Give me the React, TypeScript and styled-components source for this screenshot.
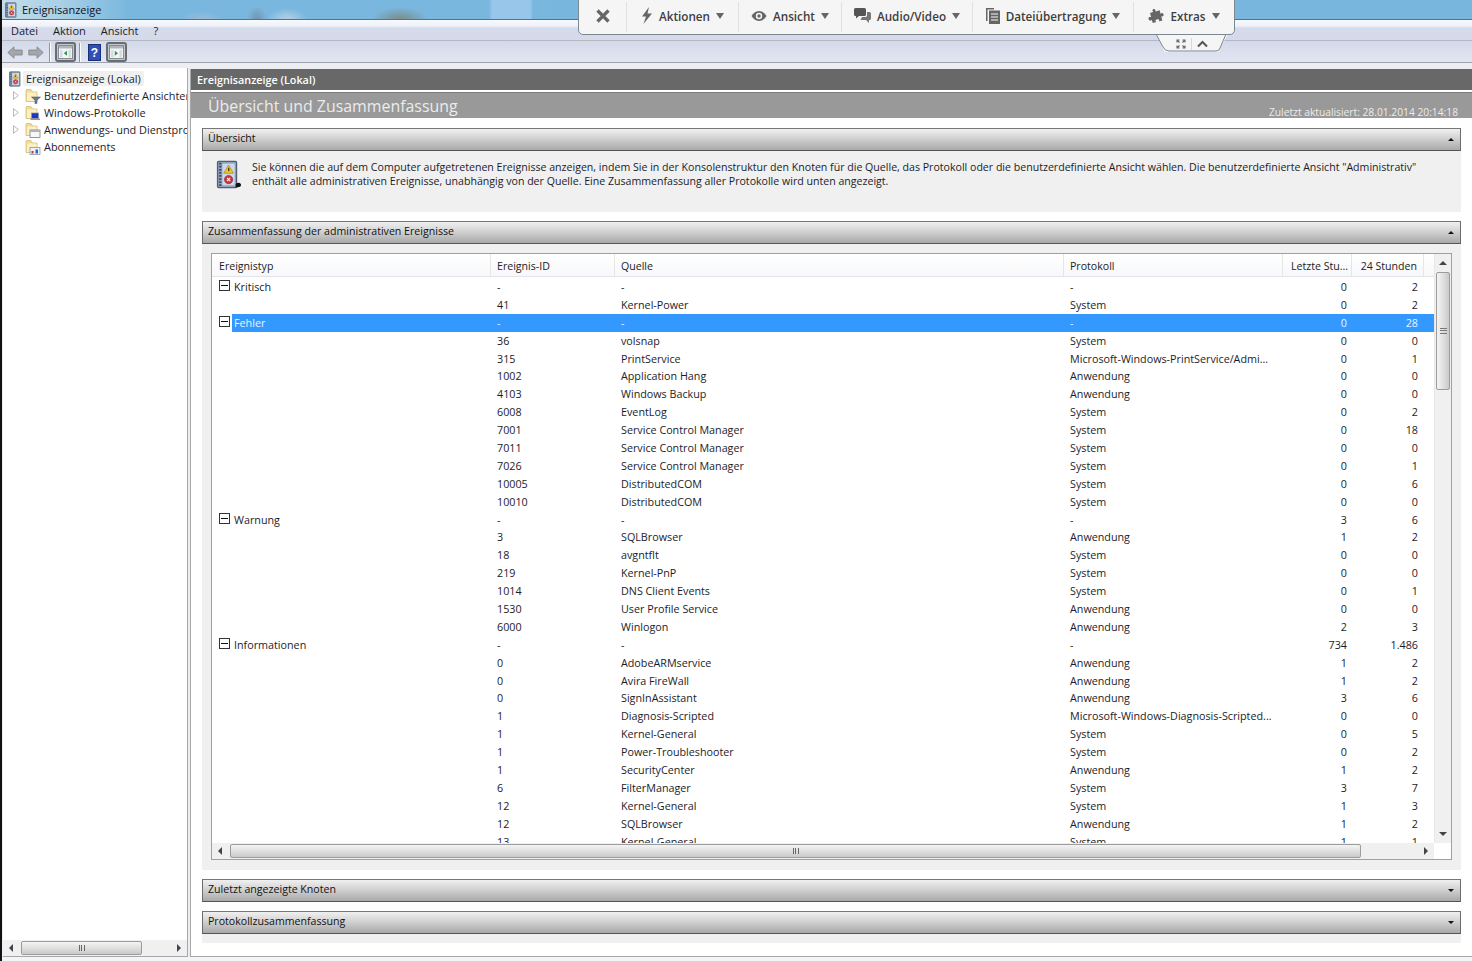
import React from 'react';
import styled, { createGlobalStyle } from 'styled-components';

const Global = createGlobalStyle`
  html, body { margin: 0; padding: 0; height: 961px; overflow: hidden; background: #f1f4f9; }
  #root { height: 961px; }
  * { box-sizing: border-box; }
`;
const FONT = `"Open Sans", "Noto Sans", "Liberation Sans", sans-serif`;

const Page = styled.div`
  position: relative; width: 1472px; height: 961px; overflow: hidden;
  font: 10.75px ${FONT}; color: #1c1c28; border-left: 2px solid #111;
  display: flex; flex-direction: column;
`;
const TitleBar = styled.div`
  height: 20px; flex: none; display: flex; align-items: center; gap: 3px; padding-left: 1px;
  background:
    radial-gradient(ellipse 10px 14px at 255px 20px, rgba(110,115,135,.55), transparent),
    radial-gradient(ellipse 22px 9px at 200px 20px, rgba(170,190,215,.7), transparent),
    radial-gradient(ellipse 20px 12px at 285px 20px, rgba(205,220,235,.75), transparent),
    radial-gradient(ellipse 28px 13px at 398px 20px, rgba(120,125,105,.75), transparent),
    linear-gradient(90deg, transparent 487px, rgba(165,205,240,.7) 490px, rgba(165,205,240,.7) 528px, transparent 531px),
    linear-gradient(90deg, #c3dcea 0, #a8d0e6 60px, #7ab7de 125px, #79b6dd 100%);
  border-bottom: 1px solid #5e6f7e; font-size: 11px; color: #101018;
`;
const MenuBar = styled.div`
  height: 21px; flex: none; display: flex; align-items: center; gap: 15px; padding-left: 9px;
  background: linear-gradient(#f8f9fc 0, #eef1f8 30%, #d6dbea 40%, #d5daea 100%); border-bottom: 1px solid #b4b8c0; font-size: 11px;
`;
const ToolBar = styled.div`
  height: 22px; flex: none; display: flex; align-items: center; padding: 1px 0 0 5px;
  background: linear-gradient(#d3d9ea, #e2e6f2); border-bottom: 1px solid #9ea3ab;
`;
const ToolSlot = styled.div<{ $ml: number }>`margin-left: ${p => p.$ml}px; display: flex; flex: none;`;
const ToolSep = styled.div<{ $ml: number }>`width: 1px; height: 19px; flex: none; margin-left: ${p => p.$ml}px; background: #8f959e; box-shadow: 1px 0 #fff;`;
const ToolFrame = styled.div<{ $ml: number }>`
  width: 21px; height: 20px; flex: none; margin-left: ${p => p.$ml}px; border: 2px solid #686c73; border-radius: 3px; background: #c3c6cc;
  display: flex; align-items: center; justify-content: center;
`;
const Columns = styled.div`
  flex: 1; min-height: 0; display: flex; padding-top: 5px; background: #eceef2;
`;
const TreePane = styled.div`
  width: 185px; flex: none; margin-left: 1px; background: #fff; border-right: 1px solid #a8a8a8; border-bottom: 1px solid #a8a8a8;
  display: flex; flex-direction: column; padding-top: 2px;
`;
const TreeList = styled.div`flex: 1; overflow: hidden; display: flex; flex-direction: column;`;
const TreeRow = styled.div<{ $root?: boolean }>`
  height: 17px; flex: none; display: flex; align-items: center; white-space: nowrap; overflow: hidden;
  padding-left: ${p => (p.$root ? 4 : 9)}px; font-size: 10.9px;
`;
const RootLabel = styled.span`background: #f0f0f0; border-radius: 2px; padding: 0 3px;`;
const TreeLabel = styled.span`margin-left: 3px;`;
const HScroll = styled.div`height: 16px; flex: none; background: #f0f0f0; position: relative;`;
const Main = styled.div`
  flex: 1; min-width: 0; margin-left: 2px; margin-top: 1px; border-left: 1px solid #a8a8a8; border-bottom: 1px solid #a8a8a8;
  display: flex; flex-direction: column; background: #fff;
`;
const DarkHead = styled.div`
  height: 21px; flex: none; background: #686868; color: #fff; font-weight: 600; font-size: 10.8px;
  display: flex; align-items: center; padding-left: 6px;
`;
const GrayHead = styled.div`
  height: 26px; flex: none; margin-top: 2px; background: #999; color: #ececec; display: flex; justify-content: space-between;
  padding: 0 14px 0 17px; border-top: 1px solid #7d7d7d;
`;
const GrayTitle = styled.div`font-size: 15.9px; line-height: 26px;`;
const Updated = styled.div`font-size: 10.25px; align-self: flex-end; line-height: 14px; margin-bottom: -1px;`;
const Content = styled.div`flex: 1; min-height: 0; padding: 10px 11px 0 11px; display: flex; flex-direction: column; background: #fff;`;
const SectionHead = styled.div`
  height: 23px; flex: none; border: 1px solid #6c6c6c; border-bottom-color: #555; border-top-color: #777; background: linear-gradient(#f0f0f0, #dcdcdc 30%, #a9a9a9);
  display: flex; align-items: center; justify-content: space-between; padding: 0 6px 3px 5px; font-size: 10.6px; color: #111;
`;
const Caret = styled.span<{ $up?: boolean }>`
  width: 0; height: 0; margin-top: 2px; border-left: 3px solid transparent; border-right: 3px solid transparent;
  ${p => (p.$up ? 'border-bottom: 3px solid #111;' : 'border-top: 3px solid #111;')}
`;
const SectionBody = styled.div<{ $h: number; $gap: number }>`
  height: ${p => p.$h}px; flex: none; margin-bottom: ${p => p.$gap}px; background: #f0f0f0;
`;
const Intro = styled.div`display: flex; padding: 9px 0 0 11px; gap: 10px; font-size: 10.6px; line-height: 14px;`;
const IntroText = styled.div`width: 1175px;`;
const ListBody = styled(SectionBody)`padding: 9px 9px 0 9px;`;
const ListBox = styled.div`height: 607px; background: #fff; border: 1px solid #a0a0a0; display: flex; flex-direction: column; position: relative;`;
const ListTop = styled.div`flex: 1; min-height: 0; display: flex;`;
const ListMain = styled.div`flex: 1; min-width: 0; overflow: hidden; display: flex; flex-direction: column;`;
const COLS = '279px 124px 449px 219px 69px 72px 10px';
const HeadRow = styled.div`
  display: grid; grid-template-columns: ${COLS}; height: 23px; flex: none; border-bottom: 1px solid #e2e4e8; font-size: 10.6px; color: #222;
`;
const HeadCell = styled.div<{ $right?: boolean; $pl?: number }>`
  padding: 1px 6px 0 ${p => p.$pl ?? 6}px; border-right: 1px solid #e6e6e6; display: flex; align-items: center; white-space: nowrap;
  justify-content: ${p => (p.$right ? 'flex-end' : 'flex-start')};
  background: linear-gradient(#fff, #f7f8fa);
`;
const Rows = styled.div`padding-top: 1px;`;
const Row = styled.div`
  display: grid; grid-template-columns: ${COLS}; height: 17.9px; align-items: center; font-size: 10.75px; white-space: nowrap;
  color: #1c1c28;
`;
const TypeCell = styled.div`display: flex; align-items: center; padding-left: 7px; height: 100%;`;
const TypeLabel = styled.span<{ $sel?: boolean }>`margin-left: 2px; align-self: stretch; display: flex; align-items: center; flex: 1; padding-left: 2px;
  ${p => p.$sel && 'background: #3399ff; color: #eaf4ff;'}
`;
const Cell = styled.div<{ $sel?: boolean; $right?: boolean; $pr?: number }>`
  padding: 0 ${p => p.$pr ?? 6}px 0 6px; height: 100%; display: flex; align-items: center; overflow: hidden;
  justify-content: ${p => (p.$right ? 'flex-end' : 'flex-start')};
  ${p => p.$sel && 'background: #3399ff; color: #eaf4ff;'}
`;
const Toggle = styled.span`
  width: 11px; height: 11px; flex: none; border: 1px solid #333; position: relative; background: #fff; margin-top: -3px;
  &::after { content: ''; position: absolute; left: 1px; right: 1px; top: 4px; height: 1px; background: #111; }
`;
const VScroll = styled.div`width: 17px; flex: none; background: #f0f0f0; position: relative; border-left: 1px solid #e8e8e8;`;
const ArrowBtn = styled.div<{ $dir: 'up' | 'down' | 'left' | 'right' }>`
  position: absolute; width: 0; height: 0;
  ${p => p.$dir === 'up' && 'top: 7px; left: 4px; border-left: 4px solid transparent; border-right: 4px solid transparent; border-bottom: 4px solid #444;'}
  ${p => p.$dir === 'down' && 'bottom: 7px; left: 4px; border-left: 4px solid transparent; border-right: 4px solid transparent; border-top: 4px solid #444;'}
  ${p => p.$dir === 'left' && 'left: 6px; top: 4px; border-top: 4px solid transparent; border-bottom: 4px solid transparent; border-right: 4px solid #444;'}
  ${p => p.$dir === 'right' && 'right: 6px; top: 4px; border-top: 4px solid transparent; border-bottom: 4px solid transparent; border-left: 4px solid #444;'}
`;
const VThumb = styled.div`
  position: absolute; left: 1px; right: 1px; top: 18px; height: 118px; border: 1px solid #9c9c9c; border-radius: 2px;
  background: linear-gradient(90deg, #f4f4f4, #dedede 55%, #c9c9c9);
`;
const GripV = styled.div`position: absolute; left: 3px; top: 55px; width: 7px; height: 6px; border-top: 1px solid #777; border-bottom: 1px solid #777;
  &::after { content: ''; display: block; height: 1px; background: #777; margin-top: 1px; }`;
const HBar = styled.div`height: 16px; flex: none; background: #f0f0f0; position: relative; margin-right: 17px;`;
const HThumb = styled.div<{ $l: number; $w: number }>`
  position: absolute; left: ${p => p.$l}px; width: ${p => p.$w}px; top: 1px; bottom: 1px; border: 1px solid #9c9c9c; border-radius: 2px;
  background: linear-gradient(#f4f4f4, #dedede 55%, #c9c9c9);
`;
const GripH = styled.div`position: absolute; left: 50%; top: 3px; width: 6px; height: 6px; margin-left: -3px; border-left: 1px solid #666; border-right: 1px solid #666;
  &::after { content: ''; display: block; width: 1px; height: 6px; background: #666; margin-left: 1.5px; }`;
const Filler = styled.div`height: 9px; flex: none; background: #f0f0f0;`;
const BottomStrip = styled.div`height: 4px; flex: none; background: #f1f4f9;`;

/* Remote-control bar overlay */
const Remote = styled.div`
  position: absolute; left: 576px; top: -2px; width: 657px; height: 37px; background: #f5f5f5; border: 1px solid #7d8790; border-radius: 0 0 5px 5px;
  display: flex; align-items: center; font: 600 11.7px ${FONT}; color: #3e3e3e; z-index: 3;
`;
const RemoteTab = styled.div`
  position: absolute; left: 1154px; top: 34px; width: 72px; height: 18px; z-index: 2; background: #f5f5f5;
  clip-path: polygon(0 0, 100% 0, 86% 100%, 12% 100%);
  display: flex; align-items: center; padding-left: 20px; padding-top: 2px;
`;
const RemoteTabSep = styled.span`width: 1px; height: 12px; background: #d8d8d8; margin: 0 5px;`;
const RemoteTabEdge = styled.svg`position: absolute; left: 1152px; top: 33px; z-index: 4; pointer-events: none;`;
const RemoteItem = styled.div<{ $w: number }>`
  width: ${p => p.$w}px; height: 30px; flex: none; display: flex; align-items: center; justify-content: center; gap: 6px;
  border-right: 1px solid #e0e0e0; white-space: nowrap; padding-bottom: 2px;
  &:last-child { border-right: 0; }
`;
const Down = styled.span`
  width: 0; height: 0; border-left: 4px solid transparent; border-right: 4px solid transparent; border-top: 6px solid #666;
`;

/* Icons */
const Book = ({ s = 16, dot }: { s?: number; dot?: boolean }) => (
  <svg width={s} height={s} viewBox="0 0 16 16" style={{ flex: 'none' }}>
    <rect x="2.500" y=".8" width="10.500" height="14.400" rx=".6" fill="#8fa1bb" stroke="#4f5f78" strokeWidth=".7" />
    <path d="M4 1.500v13" stroke="#3f4e66" strokeWidth="1.300" strokeDasharray="1 .7" />
    <rect x="5.200" y="2" width="6.800" height="12" fill="#cdd8e8" />
    <path d="M8.600 2.800L11.300 7.300H5.900Z" fill="#f0c52a" stroke="#a8871a" strokeWidth=".4" />
    <rect x="8.300" y="4.300" width=".7" height="1.800" fill="#40300a" />
    <circle cx="8.600" cy="10.800" r="2.300" fill="#c9343c" stroke="#7e1e26" strokeWidth=".3" />
    <path d="M7.700 9.900l1.800 1.800m0-1.800l-1.800 1.800" stroke="#fff" strokeWidth=".6" />
    {dot && <path d="M12.500 13.500a1.500 1.200 0 1 1 2.400 1.200l-2.400.6Z" fill="#111" />}
  </svg>
);
const Expander = ({ hidden }: { hidden?: boolean }) => (
  <svg width="6" height="9" viewBox="0 0 6 9" style={{ flex: 'none', marginLeft: 1, marginRight: 6, visibility: hidden ? 'hidden' : 'visible' }}>
    <path d="M.5.700L5.300 4.500.5 8.300Z" fill="#fff" stroke="#a6a6a6" strokeWidth=".8" />
  </svg>
);
const Folder = ({ kind }: { kind: 'filter' | 'log' | 'app' | 'sub' }) => (
  <svg width="16" height="16" viewBox="0 0 16 16" style={{ flex: 'none' }}>
    <path d="M1 2v11.500h11V4H7.500L6 1.500H1.500Z" fill="#f2dc95" stroke="#cdb472" strokeWidth=".7" />
    <rect x="2" y="4.500" width="9.500" height="8.500" fill="#fbf0c4" />
    {kind === 'filter' && <path d="M6.500 9h9l-3.500 3.200v3l-2 .6v-3.600Z" fill="#6b7d90" stroke="#3c4a5a" strokeWidth=".5" />}
    {kind === 'log' && <g><rect x="6.500" y="8" width="7" height="5.500" fill="#2036c0" stroke="#8a93a8" strokeWidth=".7" /><path d="M5.500 13.500h9.500V15H5.500Z" fill="#8b93a8" /></g>}
    {kind === 'app' && <g><rect x="5" y="8" width="10" height="7.500" fill="#f7f7f7" stroke="#6a6a6a" strokeWidth=".7" /><rect x="5" y="8" width="10" height="2" fill="#aab3c0" /></g>}
    {kind === 'sub' && <g><rect x="5" y="8.500" width="10" height="7" fill="#eef2f8" stroke="#7a8aa0" strokeWidth=".7" /><rect x="6.500" y="12" width="2" height="2.500" fill="#c9343c" /><rect x="10.500" y="10.500" width="2.500" height="4" fill="#3366cc" /></g>}
  </svg>
);
const NavArrow = ({ right }: { right?: boolean }) => (
  <svg width="16" height="13" viewBox="0 0 16 13" style={{ flex: 'none', transform: right ? 'scaleX(-1)' : undefined }}>
    <path d="M.8 6.500L7 .8v3.200h8.200v5H7v3.200Z" fill="#a3a7a9" stroke="#808488" strokeWidth=".8" />
  </svg>
);
const PaneIcon = ({ right }: { right?: boolean }) => (
  <svg width="15" height="14" viewBox="0 0 15 14">
    <rect x=".5" y=".5" width="14" height="13" fill="#f2f4f6" stroke="#868c94" />
    <rect x="1" y="1" width="13" height="2.500" fill="#aeb6c0" />
    <rect x="2" y="5" width="2.500" height="7.500" fill="#d6dbe2" />
    <rect x="10.500" y="5" width="2.500" height="7.500" fill="#d6dbe2" />
    <path d={right ? 'M5.800 5.800v5l3.200-2.500Z' : 'M9 5.800v5L5.800 8.300Z'} fill="#2f9a46" />
  </svg>
);
const HelpIcon = () => (
  <svg width="13" height="17" viewBox="0 0 13 17" style={{ flex: 'none' }}>
    <rect x=".5" y=".5" width="12" height="16" fill="#2c4fb8" stroke="#1b2f78" />
    <text x="6.500" y="13" textAnchor="middle" fontSize="12" fontWeight="700" fill="#fff" fontFamily="Liberation Sans">?</text>
  </svg>
);
const Bolt = () => (
  <svg width="12" height="17" viewBox="0 0 12 17"><path d="M8 0L1 9.500h4L2.500 17 11 6.500H6.500Z" fill="#666" /></svg>
);
const Eye = () => (
  <svg width="16" height="12" viewBox="0 0 16 12"><path d="M8 1C4.500 1 2 3.500.5 6 2 8.500 4.500 11 8 11s6-2.500 7.500-5C14 3.500 11.500 1 8 1Z" fill="#666" /><circle cx="8" cy="6" r="3.200" fill="#f5f5f5" /><circle cx="8" cy="6" r="1.700" fill="#666" /></svg>
);
const Chat = () => (
  <svg width="17" height="16" viewBox="0 0 17 16"><path d="M1.500 0h9A1.500 1.500 0 0 1 12 1.500v5A1.500 1.500 0 0 1 10.500 8H5L2 10.500V8h-.5A1.500 1.500 0 0 1 0 6.500v-5A1.500 1.500 0 0 1 1.500 0Z" fill="#555" /><path d="M13 4h2.500A1.500 1.500 0 0 1 17 5.500v5a1.500 1.500 0 0 1-1.500 1.500H15v3l-3-3H6.500L8 9h3.500A1.500 1.500 0 0 0 13 7.500Z" fill="#777" /></svg>
);
const Files = () => (
  <svg width="14" height="16" viewBox="0 0 14 16"><path d="M0 0h8v1.500H1.500V13H0Z" fill="#666" /><rect x="3" y="2.500" width="11" height="13.500" fill="#666" /><path d="M5 6h7M5 9h7M5 12h7" stroke="#f5f5f5" strokeWidth="1.200" /></svg>
);
const Puzzle = () => (
  <svg width="16" height="16" viewBox="0 0 16 16"><path d="M6 1.500c1-1.500 3-1 3 .5 0 .7-.4 1 0 1.500H13v3.800c.6-.4 1-.8 1.600-.6 1.500.5 1.500 3 0 3.400-.6.100-1-.3-1.600-.6V14H9.500c.4-.7.800-1 .4-1.700-.6-1.200-3.200-1.200-3.600 0-.3.800.2 1.100.5 1.700H3v-3.500c-.7.400-1.200.800-2 .4-1.300-.7-1.300-3 0-3.500.8-.3 1.300.2 2 .5V3.500h3.200c.3-.6-.5-1.100-.2-2Z" fill="#666" transform="rotate(-15 8 8)" /></svg>
);
const Fullscreen = () => (
  <svg width="10" height="10" viewBox="0 0 10 10" fill="none" stroke="#666" strokeWidth="1.100"><path d="M1 3.500V1h2.500M9 3.500V1H6.500M1 6.500V9h2.500M9 6.500V9H6.500M1.500 1.500l2 2M8.500 1.500l-2 2M1.500 8.500l2-2M8.500 8.500l-2-2" /></svg>
);
const Chevron = () => (
  <svg width="11" height="8" viewBox="0 0 11 8" fill="none" stroke="#555" strokeWidth="2"><path d="M1 6.500l4.500-4.500 4.500 4.500" /></svg>
);

type R = [string, string, string, string, string, string, string?];
const rows: R[] = [
  ['Kritisch', '-', '-', '-', '0', '2'],
  ['', '41', 'Kernel-Power', 'System', '0', '2'],
  ['Fehler', '-', '-', '-', '0', '28', 'sel'],
  ['', '36', 'volsnap', 'System', '0', '0'],
  ['', '315', 'PrintService', 'Microsoft-Windows-PrintService/Admi...', '0', '1'],
  ['', '1002', 'Application Hang', 'Anwendung', '0', '0'],
  ['', '4103', 'Windows Backup', 'Anwendung', '0', '0'],
  ['', '6008', 'EventLog', 'System', '0', '2'],
  ['', '7001', 'Service Control Manager', 'System', '0', '18'],
  ['', '7011', 'Service Control Manager', 'System', '0', '0'],
  ['', '7026', 'Service Control Manager', 'System', '0', '1'],
  ['', '10005', 'DistributedCOM', 'System', '0', '6'],
  ['', '10010', 'DistributedCOM', 'System', '0', '0'],
  ['Warnung', '-', '-', '-', '3', '6'],
  ['', '3', 'SQLBrowser', 'Anwendung', '1', '2'],
  ['', '18', 'avgntflt', 'System', '0', '0'],
  ['', '219', 'Kernel-PnP', 'System', '0', '0'],
  ['', '1014', 'DNS Client Events', 'System', '0', '1'],
  ['', '1530', 'User Profile Service', 'Anwendung', '0', '0'],
  ['', '6000', 'Winlogon', 'Anwendung', '2', '3'],
  ['Informationen', '-', '-', '-', '734', '1.486'],
  ['', '0', 'AdobeARMservice', 'Anwendung', '1', '2'],
  ['', '0', 'Avira FireWall', 'Anwendung', '1', '2'],
  ['', '0', 'SignInAssistant', 'Anwendung', '3', '6'],
  ['', '1', 'Diagnosis-Scripted', 'Microsoft-Windows-Diagnosis-Scripted...', '0', '0'],
  ['', '1', 'Kernel-General', 'System', '0', '5'],
  ['', '1', 'Power-Troubleshooter', 'System', '0', '2'],
  ['', '1', 'SecurityCenter', 'Anwendung', '1', '2'],
  ['', '6', 'FilterManager', 'System', '3', '7'],
  ['', '12', 'Kernel-General', 'System', '1', '3'],
  ['', '12', 'SQLBrowser', 'Anwendung', '1', '2'],
  ['', '13', 'Kernel-General', 'System', '1', '1'],
];

export default function App() {
  return (
    <Page>
      <Global />
      <TitleBar><Book /><span>Ereignisanzeige</span></TitleBar>
      <MenuBar><span>Datei</span><span>Aktion</span><span>Ansicht</span><span>?</span></MenuBar>
      <ToolBar>
        <NavArrow />
        <ToolSlot $ml={5}><NavArrow right /></ToolSlot>
        <ToolSep $ml={5} />
        <ToolFrame $ml={5}><PaneIcon /></ToolFrame>
        <ToolSep $ml={3} />
        <ToolSlot $ml={8}><HelpIcon /></ToolSlot>
        <ToolFrame $ml={5}><PaneIcon right /></ToolFrame>
      </ToolBar>
      <Columns>
        <TreePane>
          <TreeList>
            <TreeRow $root><Book /><RootLabel>Ereignisanzeige (Lokal)</RootLabel></TreeRow>
            <TreeRow><Expander /><Folder kind="filter" /><TreeLabel>Benutzerdefinierte Ansichten</TreeLabel></TreeRow>
            <TreeRow><Expander /><Folder kind="log" /><TreeLabel>Windows-Protokolle</TreeLabel></TreeRow>
            <TreeRow><Expander /><Folder kind="app" /><TreeLabel>Anwendungs- und Dienstprotokolle</TreeLabel></TreeRow>
            <TreeRow><Expander hidden /><Folder kind="sub" /><TreeLabel>Abonnements</TreeLabel></TreeRow>
          </TreeList>
          <HScroll>
            <ArrowBtn $dir="left" /><ArrowBtn $dir="right" />
            <HThumb $l={18} $w={121}><GripH /></HThumb>
          </HScroll>
        </TreePane>
        <Main>
          <DarkHead>Ereignisanzeige (Lokal)</DarkHead>
          <GrayHead><GrayTitle>Übersicht und Zusammenfassung</GrayTitle><Updated>Zuletzt aktualisiert: 28.01.2014 20:14:18</Updated></GrayHead>
          <Content>
            <SectionHead>Übersicht<Caret $up /></SectionHead>
            <SectionBody $h={61} $gap={9}>
              <Intro>
                <Book s={29} dot />
                <IntroText>Sie können die auf dem Computer aufgetretenen Ereignisse anzeigen, indem Sie in der Konsolenstruktur den Knoten für die Quelle, das Protokoll oder die benutzerdefinierte Ansicht wählen. Die benutzerdefinierte Ansicht "Administrativ" enthält alle administrativen Ereignisse, unabhängig von der Quelle. Eine Zusammenfassung aller Protokolle wird unten angezeigt.</IntroText>
              </Intro>
            </SectionBody>
            <SectionHead>Zusammenfassung der administrativen Ereignisse<Caret $up /></SectionHead>
            <ListBody $h={626} $gap={9}>
              <ListBox>
                <ListTop>
                  <ListMain>
                    <HeadRow>
                      <HeadCell $pl={7}>Ereignistyp</HeadCell><HeadCell>Ereignis-ID</HeadCell><HeadCell>Quelle</HeadCell><HeadCell>Protokoll</HeadCell>
                      <HeadCell $pl={8}>Letzte Stu...</HeadCell><HeadCell $right>24 Stunden</HeadCell><HeadCell />
                    </HeadRow>
                    <Rows>
                      {rows.map((r, i) => {
                        const sel = r[6] === 'sel';
                        return (
                          <Row key={i}>
                            <TypeCell>
                              {r[0] && <Toggle />}
                              {r[0] && <TypeLabel $sel={sel}>{r[0]}</TypeLabel>}
                            </TypeCell>
                            <Cell $sel={sel}>{r[1]}</Cell>
                            <Cell $sel={sel}>{r[2]}</Cell>
                            <Cell $sel={sel}>{r[3]}</Cell>
                            <Cell $sel={sel} $right $pr={5}>{r[4]}</Cell>
                            <Cell $sel={sel} $right>{r[5]}</Cell>
                            <Cell $sel={sel} />
                          </Row>
                        );
                      })}
                    </Rows>
                  </ListMain>
                  <VScroll>
                    <ArrowBtn $dir="up" /><ArrowBtn $dir="down" />
                    <VThumb><GripV /></VThumb>
                  </VScroll>
                </ListTop>
                <HBar>
                  <ArrowBtn $dir="left" /><ArrowBtn $dir="right" />
                  <HThumb $l={18} $w={1131}><GripH /></HThumb>
                </HBar>
              </ListBox>
            </ListBody>
            <SectionHead>Zuletzt angezeigte Knoten<Caret /></SectionHead>
            <SectionBody $h={0} $gap={9} />
            <SectionHead>Protokollzusammenfassung<Caret /></SectionHead>
            <Filler />
          </Content>
        </Main>
      </Columns>
      <BottomStrip />
      <Remote>
        <RemoteItem $w={48}><svg width="14" height="14" viewBox="0 0 14 14" stroke="#666" strokeWidth="3.200"><path d="M1.500 1.500l11 11M12.500 1.500l-11 11" /></svg></RemoteItem>
        <RemoteItem $w={112}><Bolt />Aktionen<Down /></RemoteItem>
        <RemoteItem $w={103}><Eye />Ansicht<Down /></RemoteItem>
        <RemoteItem $w={131}><Chat />Audio/Video<Down /></RemoteItem>
        <RemoteItem $w={161}><Files />Dateiübertragung<Down /></RemoteItem>
        <RemoteItem $w={100}><Puzzle />Extras<Down /></RemoteItem>
      </Remote>
      <RemoteTab><Fullscreen /><RemoteTabSep /><Chevron /></RemoteTab>
      <RemoteTabEdge width="76" height="22" viewBox="0 0 76 22" fill="none" stroke="#7d8790"><path d="M2 1l7 13q2 4 6 4h47q3 0 4-3l6-14" /></RemoteTabEdge>
    </Page>
  );
}
